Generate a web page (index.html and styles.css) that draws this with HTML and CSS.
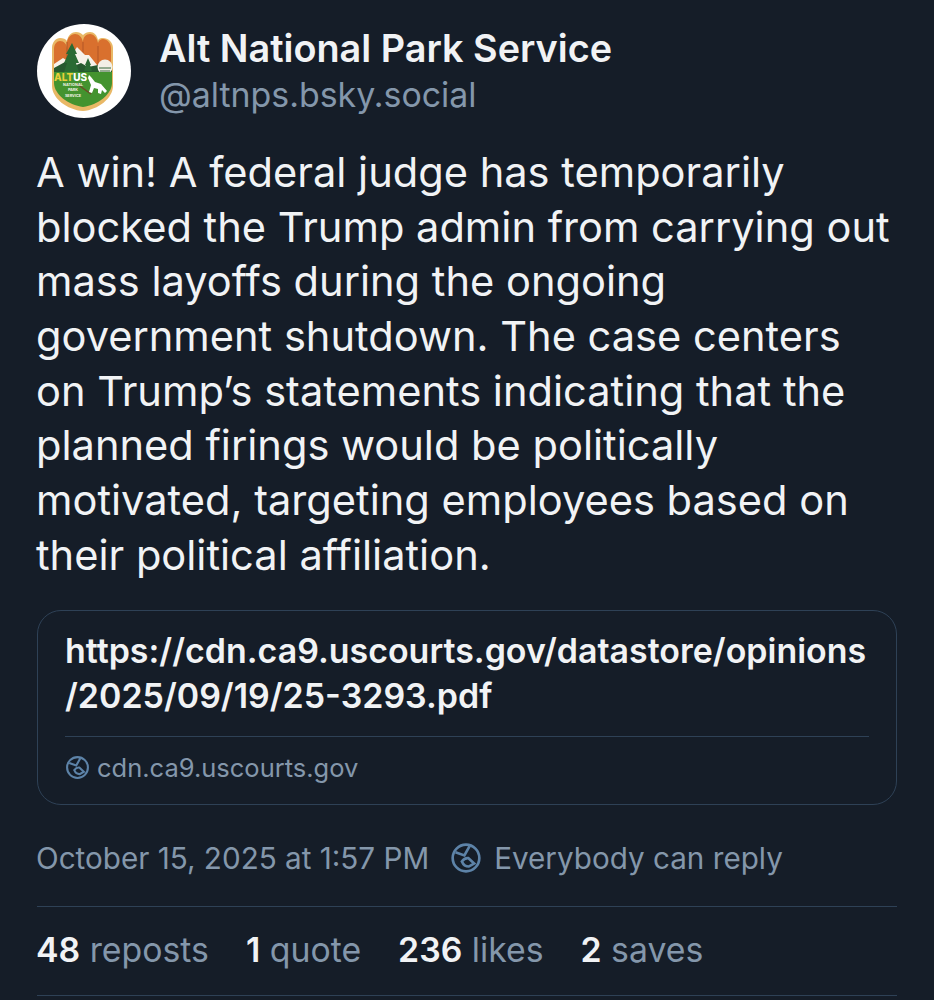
FILE: index.html
```html
<!DOCTYPE html>
<html lang="en">
<head>
<meta charset="utf-8">
<title>Alt National Park Service</title>
<link rel="stylesheet" href="styles.css">
</head>
<body>
<main class="post">
  <header class="author">
    <svg class="avatar" viewBox="0 0 94 94" aria-hidden="true">
      <circle cx="47" cy="47" r="47" fill="#fff"/>
      <path d="M15 24c0-6 4-10 8-10 3 0 6 1 7 3 1-6 5-9 9-9 3 0 5 1 7 3 2-2 4-3 7-3 4 0 7 3 8 8 2-2 3-2 5-2 5 0 10 4 10 10v38c0 12-15 24-30 25-16-1-31-13-31-25z" fill="#e9b866"/>
      <path d="M17 25c0-5 3-8 6-8 4 0 7 3 7 8v-6c0-5 4-9 8-9s7 3 8 8c0-5 3-8 7-8s7 4 8 9c1-3 3-4 5-4 4 0 8 4 8 9v25H17z" fill="#d9702e"/>
      <path d="M30 18v32M46 18v32M61 22v28" stroke="#b85a28" stroke-width="1.200"/>
      <path d="M17 48v-8l9-6 5 3 9-14 8 8 4 0 8 10 6 2 8 4v1z" fill="#f6f2ea"/>
      <path d="M17 44l11-6 9 4 7-3 7 4 10-2 14 4v6H17z" fill="#27592f"/>
      <path d="M35 19l5 11h-2l4 9h-3l3 9H27l3-9h-3l4-9h-2z" fill="#2a6a33"/>
      <path d="M51 34l3 7h-1l2 6h-8l2-6h-1z" fill="#2a6a33"/>
      <circle cx="68" cy="43" r="7.500" fill="#f3efe6"/>
      <path d="M62 44h12M63 47h10" stroke="#35663a" stroke-width="1"/>
      <path d="M17 48h58v11c0 11-14 22-29 24-15-2-29-13-29-24z" fill="#43932f"/>
      <path d="M40 60l14 10" stroke="#6d4a26" stroke-width="1.400"/>
      <path d="M52 51l2 2 4 5 6 2 6 7-2 2-3-3-1 4-3-1v-4l-4-1-2 5-3-1 2-7-3-7z" fill="#fff"/>
      <text class="badge-title" x="17" y="57">ALT<tspan class="badge-us">US</tspan></text>
      <text class="badge-line" x="36" y="62" text-anchor="middle">NATIONAL</text>
      <text class="badge-line" x="36" y="67" text-anchor="middle">PARK</text>
      <text class="badge-line" x="36" y="73" text-anchor="middle">SERVICE</text>
    </svg>
    <div class="identity">
      <div class="name">Alt National Park Service</div>
      <div class="handle">@altnps.bsky.social</div>
    </div>
  </header>

  <p class="body-text">A win! A federal judge has temporarily<br>blocked the Trump admin from carrying out<br>mass layoffs during the ongoing<br>government shutdown. The case centers<br>on Trump’s statements indicating that the<br>planned firings would be politically<br>motivated, targeting employees based on<br>their political affiliation.</p>

  <section class="card">
    <div class="card-title">https://cdn.ca9.uscourts.gov/datastore/opinions<br>/2025/09/19/25-3293.pdf</div>
    <div class="card-source">
      <svg class="globe globe-small" viewBox="0 0 24 24" aria-hidden="true">
        <circle cx="12" cy="12" r="10"/>
        <path d="M4.100 7.700l6.700 2.400 3.900-7"/>
        <path d="M8.900 14.600c1.200-1.700 3-2.700 4.800-2.500l4.400 4-4 2.300c-2.400 0-4.200-1.400-5.200-3.800z"/>
      </svg>
      <span>cdn.ca9.uscourts.gov</span>
    </div>
  </section>

  <div class="meta">
    <span>October 15, 2025 at 1:57 PM</span>
    <span class="reply">
      <svg class="globe" viewBox="0 0 24 24" aria-hidden="true">
        <circle cx="12" cy="12" r="10"/>
        <path d="M4.100 7.700l6.700 2.400 3.900-7"/>
        <path d="M8.900 14.600c1.200-1.700 3-2.700 4.800-2.500l4.400 4-4 2.300c-2.400 0-4.200-1.400-5.200-3.800z"/>
      </svg>
      <span>Everybody can reply</span>
    </span>
  </div>

  <div class="stats">
    <span class="stat-first"><b>48</b> reposts</span>
    <span><b>1</b> quote</span>
    <span><b>236</b> likes</span>
    <span><b>2</b> saves</span>
  </div>
</main>
</body>
</html>
```
FILE: styles.css
```css
html, body {
  margin: 0;
  padding: 0;
  background: #151d28;
}
body {
  font-family: Inter, "Liberation Sans", sans-serif;
  color: #f1f3f5;
  height: 1000px;
  overflow: hidden;
}
.post {
  padding: 24px 37px 0;
}
.author {
  display: flex;
  gap: 28px;
  align-items: flex-start;
}
.avatar {
  width: 94px;
  height: 94px;
  flex: none;
}
.badge-title { font: 800 10px Inter, sans-serif; fill: #e9cf3a; }
.badge-us { fill: #fff; }
.badge-line { font: 700 3.800px Inter, sans-serif; fill: #f3f3e6; }
.identity {
  padding-top: 1px;
}
.name {
  font-size: 37.800px;
  font-weight: 600;
  line-height: 46px;
  color: #f1f3f5;
}
.handle {
  font-size: 33.900px;
  line-height: 47px;
  color: #8497ab;
}
.body-text {
  margin: 27px 0 0 -1px;
  font-size: 41.600px;
  line-height: 54.650px;
  white-space: nowrap;
  color: #f1f3f5;
}
.card {
  margin-top: 28px;
  border: 1.500px solid #2e4156;
  border-radius: 24px;
  padding: 17px 27px 0;
}
.card-title {
  font-size: 33.950px;
  font-weight: 600;
  line-height: 45px;
  white-space: nowrap;
  padding-bottom: 18px;
  border-bottom: 1.500px solid #2e4156;
}
.card-source {
  display: flex;
  align-items: center;
  gap: 7px;
  box-sizing: border-box;
  height: 67px;
  padding-bottom: 6px;
  font-size: 25.500px;
  color: #8497ab;
}
.globe {
  width: 32px;
  height: 32px;
  flex: none;
  fill: none;
  stroke: #5d83a8;
  stroke-width: 2;
}
.globe-small {
  width: 25px;
  height: 25px;
}
.meta {
  display: flex;
  align-items: center;
  gap: 21px;
  margin: 34px 0 0 -1px;
  height: 38px;
  font-size: 29.650px;
  color: #8497ab;
}
.reply {
  display: flex;
  align-items: center;
  gap: 12px;
}
.stats {
  display: flex;
  gap: 37px;
  margin-top: 29px;
  padding: 21px 0 23px;
  border-top: 1.500px solid #2e4156;
  border-bottom: 1.500px solid #2e4156;
  font-size: 33.800px;
  line-height: 44px;
  color: #8497ab;
}
.stat-first {
  margin-left: -1px;
}
.stats b {
  font-weight: 600;
  color: #f1f3f5;
}
```
